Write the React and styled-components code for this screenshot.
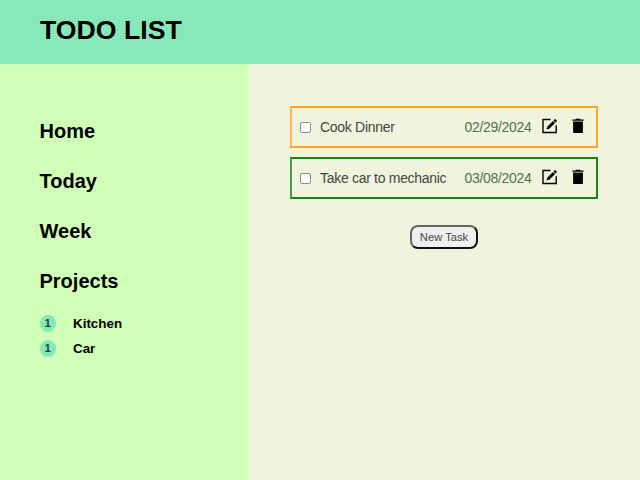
import React from 'react';
import styled, { createGlobalStyle } from 'styled-components';

const GlobalStyle = createGlobalStyle`
  * { box-sizing: border-box; }
  body { margin: 0; font-family: "Liberation Sans", Arial, sans-serif; color: #000; }
`;
const Page = styled.div`
  display: grid;
  width: 640px;
  height: 480px;
  grid-template: 64px 416px / 248px 392px;
  overflow: hidden;
`;
const Header = styled.header`
  grid-column: 1 / -1;
  background: #87e9b9;
  padding: 15px 40px;
`;
const Title = styled.h1`
  margin: 0;
  font-size: 26.7px;
  line-height: 31px;
`;
const Sidebar = styled.aside`
  background: #d0ffb7;
  padding: 55px 39.5px;
`;
const NavItem = styled.h2`
  margin: 0 0 26.1px;
  font-size: 20px;
  line-height: 24px;
`;
const Projects = styled.ul`
  list-style: none;
  margin: 0;
  margin-top: -8.6px;
  padding: 0;
`;
const Project = styled.li`
  display: flex;
  align-items: center;
  gap: 17px;
  height: 25px;
  font-size: 13.4px;
  font-weight: bold;
`;
const Count = styled.span`
  width: 16.5px;
  height: 16.5px;
  border-radius: 50%;
  background: #87e9b9;
  color: #174a35;
  font-size: 11.5px;
  line-height: 17px;
  text-align: center;
`;
const Main = styled.main`
  background: #f1f4dc;
  padding: 42px 42px 0;
  display: flex;
  flex-direction: column;
  align-items: center;
`;
const Task = styled.div`
  display: flex;
  align-items: center;
  width: 308px;
  height: 42px;
  margin-bottom: 9px;
  padding: 0 12.5px 0 8px;
  border: 2px solid ${(p) => p.$color};
  border-left-color: ${(p) => p.$edge};
`;
const Check = styled.input`
  appearance: none;
  width: 11px;
  height: 11px;
  margin: 0 9px 0 0;
  border: 1px solid #8c8c8c;
  border-radius: 2px;
  background: #fff;
  &:checked { background: #0075ff; }
`;
const Name = styled.span`
  flex: 1;
  color: #444;
  font-size: 14px;
  letter-spacing: -0.3px;
`;
const DueDate = styled.span`
  color: #4e7350;
  font-size: 14px;
  letter-spacing: -0.3px;
`;
const IconButton = styled.button`
  display: flex;
  margin: -2px 0 0 ${(p) => p.$gap}px;
  padding: 0;
  border: 0;
  background: none;
  color: #000;
`;
const NewTask = styled.button`
  width: 68px;
  height: 24px;
  margin: 17px 0 0 0;
  padding: 0;
  border: 2px solid;
  border-color: #666 #111 #111 #666;
  border-radius: 8px;
  background: #efefef;
  color: #444;
  font: 11.2px "Liberation Sans", Arial, sans-serif;
`;

const EditIcon = () => (
  <svg width="16" height="16" viewBox="0 0 16 16" fill="none">
    <path d="M8.5 1.5H1v13h13.2V7.2" stroke="currentColor" strokeWidth="1.4" />
    <path d="M4.5 11.5l.7-2.8 5.8-5.8 2.1 2.1-5.8 5.8zM11.5 2.4l1.1-1.1q.4-.4.8 0l1.3 1.3q.4.4 0 .8l-1.1 1.1z" fill="currentColor" />
  </svg>
);
const TrashIcon = () => (
  <svg width="12" height="16" viewBox="0 0 12 16" fill="currentColor">
    <path d="M.3 1.5h3L4 .7h4l.7.8h3v1.3H.3zM1.1 3.5h9.8v10.4q0 1.2-1.2 1.2H2.3q-1.2 0-1.2-1.2z" />
  </svg>
);

const tasks = [
  { name: 'Cook Dinner', date: '02/29/2024', color: '#ffa51f', edge: '#ffb45a' },
  { name: 'Take car to mechanic', date: '03/08/2024', color: '#1b841b', edge: '#4b994a' },
];
const projects = [{ name: 'Kitchen', count: 1 }, { name: 'Car', count: 1 }];

export default function App() {
  return (
    <Page>
      <GlobalStyle />
      <Header><Title>TODO LIST</Title></Header>
      <Sidebar>
        {['Home', 'Today', 'Week', 'Projects'].map((label) => (
          <NavItem key={label}>{label}</NavItem>
        ))}
        <Projects>
          {projects.map((p) => (
            <Project key={p.name}><Count>{p.count}</Count>{p.name}</Project>
          ))}
        </Projects>
      </Sidebar>
      <Main>
        {tasks.map((t) => (
          <Task key={t.name} $color={t.color} $edge={t.edge}>
            <Check type="checkbox" aria-label={t.name} />
            <Name>{t.name}</Name>
            <DueDate>{t.date}</DueDate>
            <IconButton $gap={10} aria-label="Edit"><EditIcon /></IconButton>
            <IconButton $gap={14} aria-label="Delete"><TrashIcon /></IconButton>
          </Task>
        ))}
        <NewTask>New Task</NewTask>
      </Main>
    </Page>
  );
}
